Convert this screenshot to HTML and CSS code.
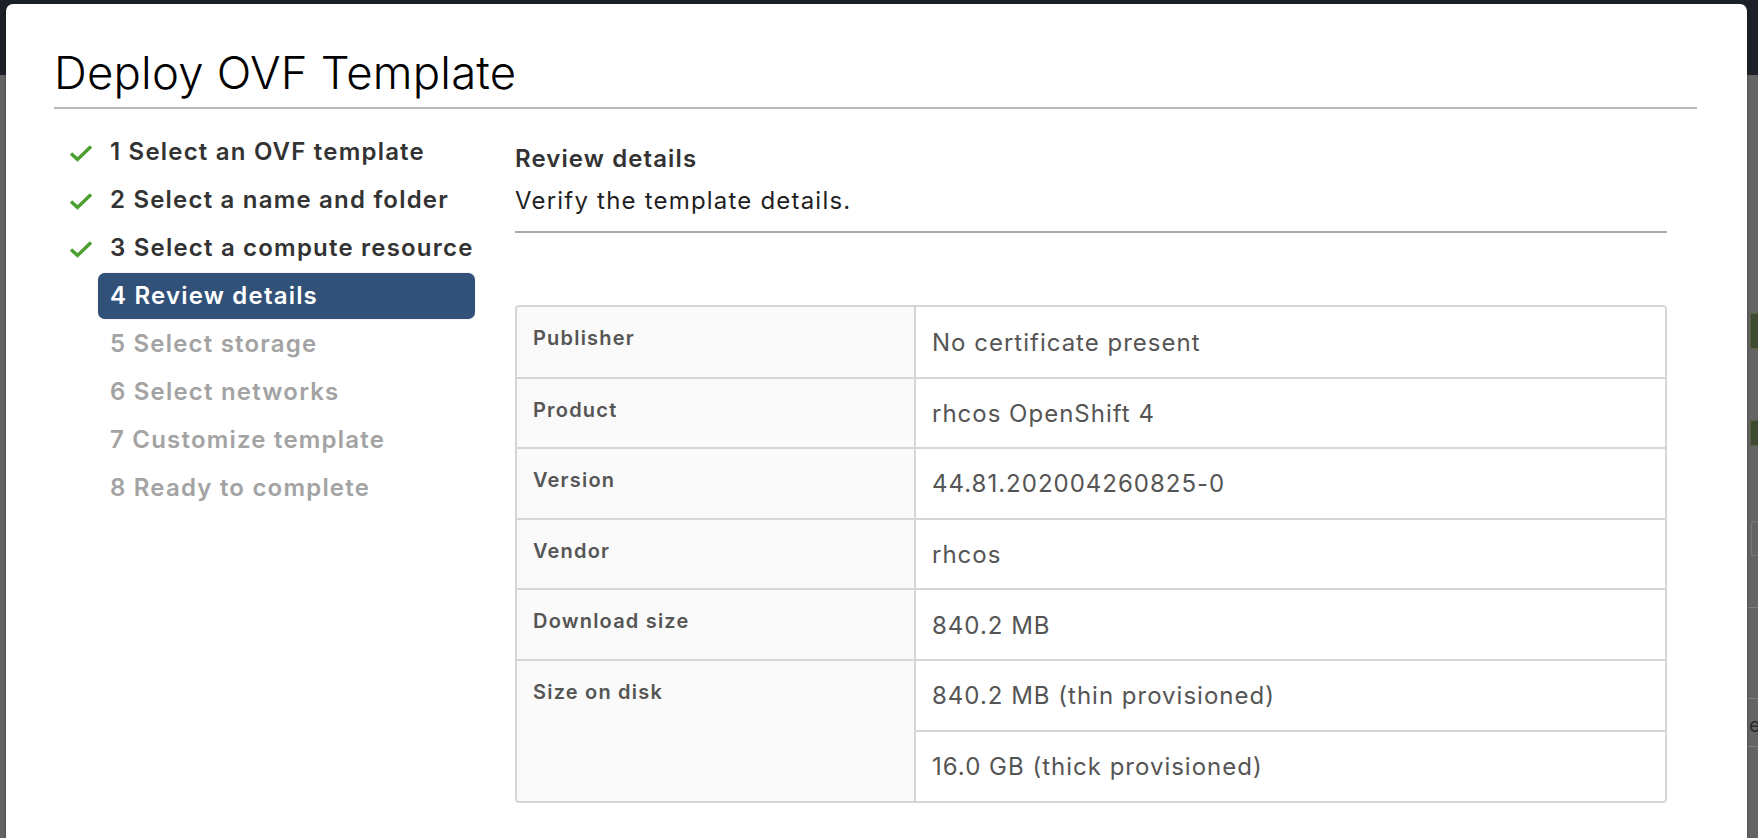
FILE: index.html
```html
<!DOCTYPE html>
<html lang="en">
<head>
<meta charset="utf-8">
<title>Deploy OVF Template</title>
<link rel="stylesheet" href="styles.css">
</head>
<body>
<div class="app">
  <header class="app-header"></header>
  <main class="app-body">
    <div class="peek">
      <span class="peek-chip chip-a"></span>
      <span class="peek-chip chip-b"></span>
      <span class="peek-box"></span>
      <span class="peek-rule rule-1"></span>
      <span class="peek-rule rule-2"></span>
      <span class="peek-text">e</span>
      <span class="peek-rule rule-3"></span>
    </div>
  </main>

  <div class="modal">
    <h1 class="modal-title">Deploy OVF Template</h1>
    <div class="wizard">
      <nav class="steps">
        <div class="step done">
          <span class="step-icon"><svg viewBox="0 0 24 18" width="24" height="18"><polyline points="2,9.5 8.5,15.5 22,2.5" fill="none" stroke="#4a9e2f" stroke-width="3.4"/></svg></span>
          <span class="step-label">1 Select an OVF template</span>
        </div>
        <div class="step done">
          <span class="step-icon"><svg viewBox="0 0 24 18" width="24" height="18"><polyline points="2,9.5 8.5,15.5 22,2.5" fill="none" stroke="#4a9e2f" stroke-width="3.4"/></svg></span>
          <span class="step-label">2 Select a name and folder</span>
        </div>
        <div class="step done">
          <span class="step-icon"><svg viewBox="0 0 24 18" width="24" height="18"><polyline points="2,9.5 8.5,15.5 22,2.5" fill="none" stroke="#4a9e2f" stroke-width="3.4"/></svg></span>
          <span class="step-label">3 Select a compute resource</span>
        </div>
        <div class="step active">
          <span class="step-icon"></span>
          <span class="step-label">4 Review details</span>
        </div>
        <div class="step todo">
          <span class="step-icon"></span>
          <span class="step-label">5 Select storage</span>
        </div>
        <div class="step todo">
          <span class="step-icon"></span>
          <span class="step-label">6 Select networks</span>
        </div>
        <div class="step todo">
          <span class="step-icon"></span>
          <span class="step-label">7 Customize template</span>
        </div>
        <div class="step todo">
          <span class="step-icon"></span>
          <span class="step-label">8 Ready to complete</span>
        </div>
      </nav>

      <section class="content">
        <h2 class="content-title">Review details</h2>
        <p class="content-sub">Verify the template details.</p>
        <div class="table-wrap">
          <table class="details">
            <tr>
              <th>Publisher</th>
              <td>No certificate present</td>
            </tr>
            <tr>
              <th>Product</th>
              <td>rhcos OpenShift 4</td>
            </tr>
            <tr>
              <th>Version</th>
              <td>44.81.202004260825-0</td>
            </tr>
            <tr>
              <th>Vendor</th>
              <td>rhcos</td>
            </tr>
            <tr>
              <th>Download size</th>
              <td>840.2 MB</td>
            </tr>
            <tr>
              <th rowspan="2">Size on disk</th>
              <td>840.2 MB (thin provisioned)</td>
            </tr>
            <tr>
              <td>16.0 GB (thick provisioned)</td>
            </tr>
          </table>
        </div>
      </section>
    </div>
  </div>
</div>
</body>
</html>
```

FILE: styles.css
```css
* { box-sizing: border-box; }

html, body {
  margin: 0;
  padding: 0;
  width: 1758px;
  height: 838px;
  overflow: hidden;
}

body {
  font-family: Inter, "Noto Sans", "Liberation Sans", sans-serif;
  background: #626262;
}

.app {
  position: relative;
  width: 1758px;
  height: 838px;
  display: flex;
  flex-direction: column;
}

.app-header {
  height: 75px;
  background: #1c2127;
  flex: none;
}

.app-body {
  flex: 1;
  background: #646464;
  display: flex;
  justify-content: flex-end;
}

.peek {
  width: 11px;
  display: flex;
  flex-direction: column;
  padding-top: 238px;
}

.peek-chip {
  display: block;
  width: 9px;
  margin-left: 3px;
  background: #3f4a33;
  border: 1px solid #56623f;
}
.chip-a { height: 36px; }
.chip-b { height: 26px; margin-top: 71px; }

.peek-box {
  display: block;
  width: 8px;
  height: 35px;
  margin-top: 75px;
  margin-left: 4px;
  border: 1px solid #6f7b7b;
  border-right: none;
  border-radius: 3px 0 0 3px;
}

.peek-rule {
  display: block;
  height: 1px;
  background: #7c7c7c;
}
.rule-1 { margin-top: 51px; }
.rule-2 { margin-top: 90px; }
.rule-3 { margin-top: 11px; }

.peek-text {
  display: block;
  color: #2a2a2a;
  font-size: 20px;
  line-height: 20px;
  margin-top: 16px;
  padding-left: 2px;
}

/* modal floats over the page */
.modal {
  position: absolute;
  left: 6px;
  top: 4px;
  width: 1741px;
  height: 900px;
  background: #fff;
  border-radius: 7px 7px 0 0;
  box-shadow: 0 1px 3px rgba(0,0,0,0.35);
  padding: 41px 50px 0 48px;
}

.modal-title {
  margin: 0;
  font-size: 45.5px;
  line-height: 56px;
  font-weight: 300;
  color: #000;
  letter-spacing: 0.2px;
  padding-bottom: 6px;
  border-bottom: 2px solid #b9b9b9;
}

.wizard {
  display: flex;
  gap: 40px;
  padding-top: 20px;
}

/* steps */
.steps {
  width: 421px;
  flex: none;
  display: flex;
  flex-direction: column;
  gap: 2px;
}

.step {
  display: flex;
  align-items: center;
  height: 46px;
}

.step-icon {
  width: 44px;
  flex: none;
  display: flex;
  align-items: center;
  padding-left: 15px;
  padding-top: 2px;
}

.step-label {
  flex: 1;
  height: 46px;
  line-height: 46px;
  padding-left: 12px;
  font-size: 24px;
  font-weight: 600;
  letter-spacing: 1.2px;
  border-radius: 7px;
  white-space: nowrap;
}

.step.done .step-label { color: #333; }
.step.active .step-label {
  background: #315179;
  color: #fff;
  box-shadow: 0 0 1px rgba(0,0,0,0.4);
}
.step.todo .step-label { color: #a3a3a3; }

/* content */
.content {
  flex: 1;
  padding-top: 16px;
  padding-right: 30px;
}

.content-title {
  margin: 0;
  font-size: 24px;
  line-height: 28px;
  font-weight: 600;
  color: #333;
  letter-spacing: 1.1px;
}

.content-sub {
  margin: 14px 0 0;
  font-size: 24px;
  line-height: 28px;
  color: #1f1f1f;
  padding-bottom: 16px;
  border-bottom: 2px solid #ababab;
  letter-spacing: 1.2px;
}

.table-wrap {
  margin-top: 72px;
  border: 2px solid #d6d6d6;
  border-radius: 4px;
  overflow: hidden;
}

.details {
  width: 100%;
  border-collapse: collapse;
}

.details tr { height: 70.6px; }

.details th,
.details td {
  border-top: 2px solid #d6d6d6;
  padding: 0 0 0 16px;
  text-align: left;
}

.details tr:first-child th,
.details tr:first-child td { border-top: none; }

.details th {
  width: 398px;
  background: #fafafa;
  border-right: 2px solid #d6d6d6;
  vertical-align: top;
  padding-top: 18px;
  font-size: 20px;
  line-height: 26px;
  font-weight: 600;
  color: #555;
  letter-spacing: 1.2px;
}

.details td {
  background: #fff;
  vertical-align: middle;
  padding-top: 2px;
  font-size: 24px;
  line-height: 30px;
  color: #555;
  letter-spacing: 1px;
}
```
